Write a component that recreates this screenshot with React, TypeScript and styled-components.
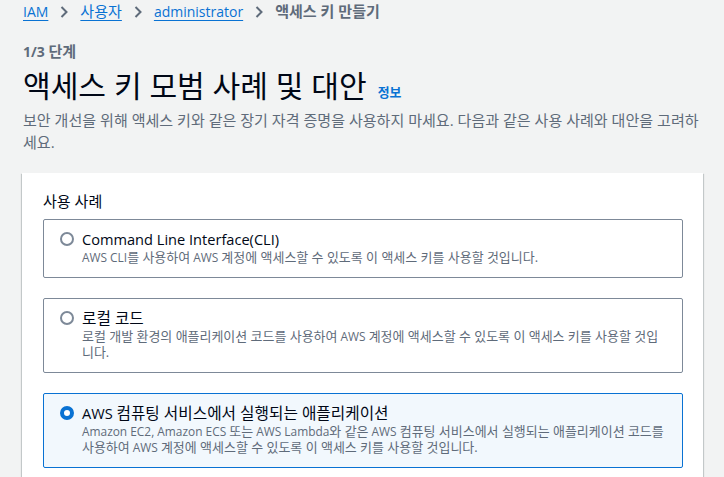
import React from "react";
import styled, { createGlobalStyle } from "styled-components";

const GlobalStyle = createGlobalStyle`
  html, body { margin: 0; padding: 0; }
  body {
    background: #f2f3f3;
    font-family: "Open Sans", "Noto Sans CJK KR", sans-serif;
    color: #000716;
    -webkit-font-smoothing: antialiased;
  }
`;

/* Hangul runs render slightly larger, like the wide Korean fallback face of the original */
const Ko = styled.span`
  font-size: 1.075em;
  line-height: 1;
`;

const H = "\\u1100-\\u11FF\\u3130-\\u318F\\uAC00-\\uD7AF";
const RUN = new RegExp(`([${H}]+(?:[ .,]+[${H}]+)*\\.?)`);

const T = ({ children }: { children: string }) => (
  <>
    {children.split(RUN).map((part, i) =>
      i % 2 === 1 ? <Ko key={i}>{part}</Ko> : part ? <React.Fragment key={i}>{part}</React.Fragment> : null
    )}
  </>
);

const Page = styled.div`
  padding: 2px 21px 0 22px;
  width: 724px;
  height: 477px;
  box-sizing: border-box;
  overflow: hidden;
`;

const Crumbs = styled.nav`
  display: flex;
  align-items: center;
  font-size: 14px;
  line-height: 20px;
  padding-left: 1px;
`;

const CrumbLink = styled.a`
  color: #0972d3;
  text-decoration: underline;
  text-underline-offset: 3px;
  text-decoration-thickness: 1px;
`;

const CrumbCurrent = styled.span`
  color: #5f6b7a;
  font-weight: 700;
`;

const Sep = styled.span`
  display: inline-flex;
  align-items: center;
  margin: 0 12px;
  color: #5f6b7a;
`;

const Step = styled.div`
  margin-top: 20px;
  padding-left: 1px;
  font-size: 14px;
  line-height: 20px;
  font-weight: 700;
  color: #5f6b7a;
`;

const TitleRow = styled.div`
  margin-top: 6px;
  display: flex;
  align-items: baseline;
  gap: 11px;
  padding-left: 1px;
`;

const Title = styled.h1`
  margin: 0;
  font-size: 28px;
  line-height: 36px;
  font-weight: 400;
  color: #000716;
`;

const Info = styled.a`
  font-size: 12px;
  font-weight: 700;
  color: #0972d3;
`;

const Lead = styled.p`
  margin: 6px 0 0;
  padding-left: 1px;
  font-size: 14px;
  line-height: 22px;
  color: #5f6b7a;
`;

const Card = styled.section`
  margin-top: 19px;
  background: #ffffff;
  padding: 19px 20px 20px 21px;
  box-shadow: 0 1px 1px 0 rgba(0, 28, 36, 0.3), 1px 1px 1px 0 rgba(0, 28, 36, 0.15),
    -1px 1px 1px 0 rgba(0, 28, 36, 0.15);
`;

const Label = styled.div`
  font-size: 14px;
  line-height: 20px;
  color: #000716;
  margin-bottom: 7px;
`;

const Options = styled.div`
  display: flex;
  flex-direction: column;
  gap: 20px;
`;

const Option = styled.label<{ $selected?: boolean }>`
  display: flex;
  align-items: flex-start;
  gap: 8px;
  padding: 9px 16px 12px 16px;
  border: 1px solid ${(p) => (p.$selected ? "#0972d3" : "#7d8998")};
  background: ${(p) => (p.$selected ? "#f2f8fd" : "#ffffff")};
  border-radius: 2px;
`;

const Radio = styled.span<{ $selected?: boolean }>`
  flex: none;
  width: 14px;
  height: 14px;
  margin-top: 3px;
  box-sizing: border-box;
  border-radius: 50%;
  background: #ffffff;
  border: ${(p) => (p.$selected ? "4px solid #0972d3" : "2px solid #7d8998")};
`;

const OptionText = styled.div`
  display: flex;
  flex-direction: column;
`;

const OptionTitle = styled.div`
  font-size: 14.6px;
  line-height: 20px;
  color: #000716;
`;

const OptionDesc = styled.div`
  font-size: 11.9px;
  line-height: 16px;
  color: #5f6b7a;

  ${Ko} {
    font-size: 1.09em;
  }
`;

const Chevron = () => (
  <svg width="8" height="12" viewBox="0 0 8 12" fill="none">
    <path d="M1.5 1 L6.5 6 L1.5 11" stroke="currentColor" strokeWidth="2" />
  </svg>
);

const options = [
  {
    title: "Command Line Interface(CLI)",
    desc: "AWS CLI를 사용하여 AWS 계정에 액세스할 수 있도록 이 액세스 키를 사용할 것입니다.",
    selected: false,
  },
  {
    title: "로컬 코드",
    desc: "로컬 개발 환경의 애플리케이션 코드를 사용하여 AWS 계정에 액세스할 수 있도록 이 액세스 키를 사용할 것입니다.",
    selected: false,
  },
  {
    title: "AWS 컴퓨팅 서비스에서 실행되는 애플리케이션",
    desc: "Amazon EC2, Amazon ECS 또는 AWS Lambda와 같은 AWS 컴퓨팅 서비스에서 실행되는 애플리케이션 코드를 사용하여 AWS 계정에 액세스할 수 있도록 이 액세스 키를 사용할 것입니다.",
    selected: true,
  },
];

export default function App() {
  return (
    <>
      <GlobalStyle />
      <Page>
        <Crumbs>
          <CrumbLink>IAM</CrumbLink>
          <Sep>
            <Chevron />
          </Sep>
          <CrumbLink>
            <T>사용자</T>
          </CrumbLink>
          <Sep>
            <Chevron />
          </Sep>
          <CrumbLink>administrator</CrumbLink>
          <Sep>
            <Chevron />
          </Sep>
          <CrumbCurrent>
            <T>액세스 키 만들기</T>
          </CrumbCurrent>
        </Crumbs>
        <Step>
          <T>1/3 단계</T>
        </Step>
        <TitleRow>
          <Title>
            <T>액세스 키 모범 사례 및 대안</T>
          </Title>
          <Info>
            <T>정보</T>
          </Info>
        </TitleRow>
        <Lead>
          <T>보안 개선을 위해 액세스 키와 같은 장기 자격 증명을 사용하지 마세요. 다음과 같은 사용 사례와 대안을 고려하세요.</T>
        </Lead>
        <Card>
          <Label>
            <T>사용 사례</T>
          </Label>
          <Options>
            {options.map((o) => (
              <Option key={o.title} $selected={o.selected}>
                <Radio $selected={o.selected} />
                <OptionText>
                  <OptionTitle>
                    <T>{o.title}</T>
                  </OptionTitle>
                  <OptionDesc>
                    <T>{o.desc}</T>
                  </OptionDesc>
                </OptionText>
              </Option>
            ))}
          </Options>
        </Card>
      </Page>
    </>
  );
}
